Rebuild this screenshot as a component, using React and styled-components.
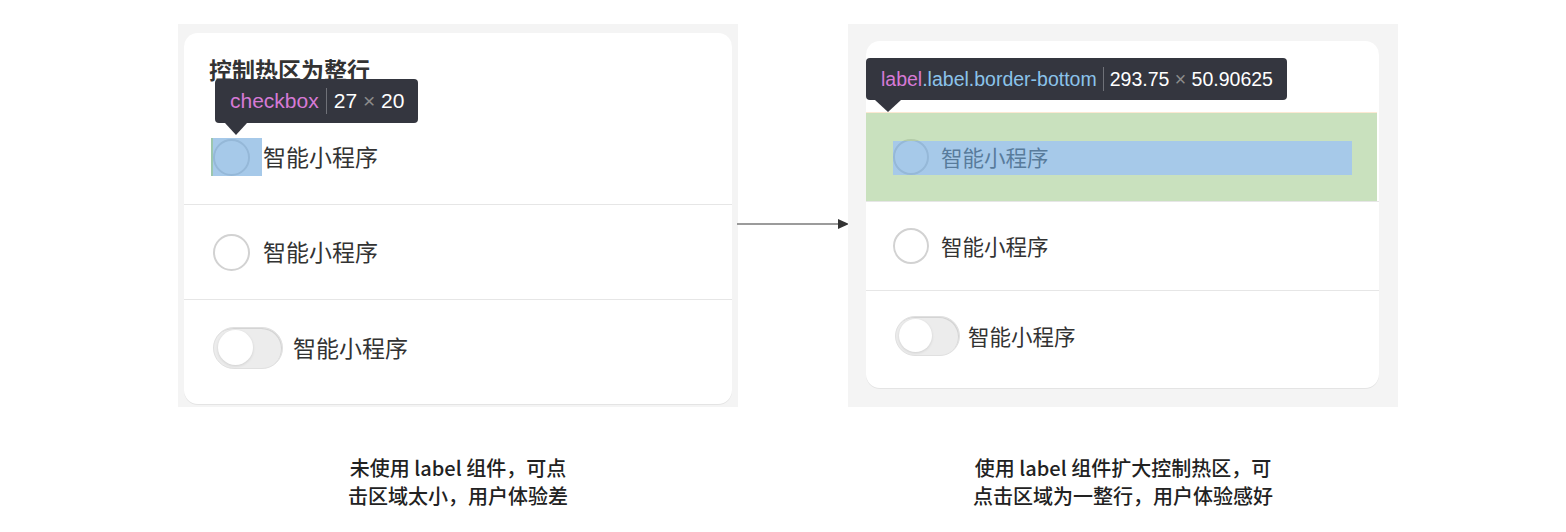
import React from "react";
import styled, { createGlobalStyle } from "styled-components";

const SIZES = {
  lg: {
    font: 23, circle: 37, check: 51, circleOffset: 2,
    swW: 70, swH: 42, thumb: 35, swPad: 4, swGap: 10,
    rowH: 95, rowPad: 27, head: 77, titlePadTop: 23, titlePadLeft: 25, bottomPad: 9,
    panelW: 560, panelPad: "9px 6px 3px 6px",
  },
  sm: {
    font: 21.5, circle: 36, check: 47, circleOffset: 0,
    swW: 65, swH: 40, thumb: 33, swPad: 3, swGap: 8,
    rowH: 89, rowPad: 27, head: 72, titlePadTop: 22, titlePadLeft: 23, bottomPad: 8,
    panelW: 550, panelPad: "17px 19px 19px 18px",
  },
};
const sz = (key) => (p) => SIZES[p.$size][key];

const GlobalStyle = createGlobalStyle`
  html, body { margin: 0; padding: 0; background: #ffffff; }
  body { font-family: "Noto Sans CJK SC", "Noto Sans", sans-serif; }
  * { box-sizing: border-box; }
`;

const Stage = styled.div`
  display: flex;
  align-items: flex-start;
  padding: 24px 0 0 178px;
  width: 1566px;
  height: 532px;
`;

const Column = styled.div`
  display: flex;
  flex-direction: column;
  width: ${sz("panelW")}px;
  flex: none;
`;

const Panel = styled.div`
  width: 100%;
  height: 383px;
  background: #f4f4f4;
  padding: ${sz("panelPad")};
`;

const Card = styled.div`
  position: relative;
  height: 100%;
  background: #ffffff;
  border-radius: 14px;
  box-shadow: 0 1px 0 #e4e4e4;
  padding-bottom: ${sz("bottomPad")}px;
  display: flex;
  flex-direction: column;
`;

const Head = styled.div`
  height: ${sz("head")}px;
  padding: ${sz("titlePadTop")}px 0 0 ${sz("titlePadLeft")}px;
  flex: none;
`;

const Title = styled.div`
  font-size: ${sz("font")}px;
  line-height: 1.2;
  font-weight: 700;
  color: #333333;
`;

const Row = styled.label`
  position: relative;
  display: flex;
  align-items: center;
  height: ${sz("rowH")}px;
  padding-left: ${sz("rowPad")}px;
  border-bottom: ${(p) => (p.$last ? "none" : "1px solid #e6e6e6")};
  flex: none;
`;

const RowText = styled.span`
  font-size: ${sz("font")}px;
  line-height: 1.2;
  color: #333333;
  margin-left: 1px;
`;

const CheckHit = styled.span`
  position: relative;
  display: flex;
  align-items: center;
  width: ${sz("check")}px;
  height: 38px;
  flex: none;
`;

const Circle = styled.span`
  display: block;
  width: ${sz("circle")}px;
  height: ${sz("circle")}px;
  margin-left: ${sz("circleOffset")}px;
  border-radius: 50%;
  border: 2px solid #d2d2d2;
  background: #ffffff;
`;

const ElementHighlight = styled.span`
  position: absolute;
  inset: 0;
  background: rgba(111, 168, 220, 0.62);
  border-left: 2px solid rgba(147, 196, 125, 0.55);
`;

const BoxHighlight = styled.span`
  position: absolute;
  top: 0;
  left: 0;
  right: 2px;
  bottom: 0;
  border-style: solid;
  border-color: rgba(147, 196, 125, 0.5);
  border-width: 28px 25px 26px 27px;
  background: rgba(111, 168, 220, 0.62);
  background-clip: padding-box;
  box-shadow: 0 -1px 0 rgba(246, 178, 107, 0.3);
`;

const Switch = styled.span`
  display: flex;
  align-items: center;
  width: ${sz("swW")}px;
  height: ${sz("swH")}px;
  margin-left: 2px;
  margin-right: ${(p) => SIZES[p.$size].swGap - 1}px;
  padding-left: ${sz("swPad")}px;
  border-radius: ${(p) => SIZES[p.$size].swH / 2}px;
  background: #ececec;
  border: 1px solid #e0e0e0;
  box-shadow: inset -1px 1px 0 #d4d4d4;
  flex: none;
`;

const Thumb = styled.span`
  display: block;
  width: ${sz("thumb")}px;
  height: ${sz("thumb")}px;
  border-radius: 50%;
  background: #ffffff;
  box-shadow: 0 1px 3px rgba(0, 0, 0, 0.12);
`;

const Tooltip = styled.div`
  position: absolute;
  left: ${(p) => p.$left}px;
  top: ${(p) => p.$top}px;
  height: ${(p) => p.$height}px;
  display: flex;
  align-items: center;
  padding: 0 14px 0 15px;
  background: #34363f;
  border-radius: 4px;
  font-family: "Liberation Sans", Arial, sans-serif;
  font-size: ${(p) => p.$font}px;
  color: #ffffff;
  white-space: nowrap;
  z-index: 2;

  &::after {
    content: "";
    position: absolute;
    top: 100%;
    left: ${(p) => p.$arrowX - p.$arrowW / 2}px;
    border-style: solid;
    border-width: 12px ${(p) => p.$arrowW / 2}px 0 ${(p) => p.$arrowW / 2}px;
    border-color: #34363f transparent transparent transparent;
  }
`;

const Tag = styled.span`
  color: #d67ad6;
`;

const ClassName = styled.span`
  color: #8bc3ea;
`;

const Sep = styled.span`
  display: inline-block;
  width: 0;
  height: 1.2em;
  border-left: 1px solid #6f7178;
  margin: 0 ${(p) => p.$gap}px;
`;

const Times = styled.span`
  color: #8c8c8c;
  white-space: pre;
`;

const ArrowBox = styled.div`
  width: 110px;
  flex: none;
  margin-top: 187px;
  margin-left: -1px;
  margin-right: 1px;
  height: 12px;
`;

const Caption = styled.p`
  margin: 47px 0 0 0;
  text-align: center;
  font-size: 20px;
  line-height: 28px;
  font-weight: 500;
  color: #222222;
`;

function Checkbox({ size, highlight }) {
  return (
    <CheckHit $size={size}>
      <Circle $size={size} />
      {highlight && <ElementHighlight />}
    </CheckHit>
  );
}

function Toggle({ size }) {
  return (
    <Switch $size={size}>
      <Thumb $size={size} />
    </Switch>
  );
}

export default function App() {
  return (
    <>
      <GlobalStyle />
      <Stage>
        <Column $size="lg">
          <Panel $size="lg">
            <Card $size="lg">
              <Head $size="lg">
                <Title $size="lg">控制热区为整行</Title>
              </Head>
              <Row $size="lg">
                <Checkbox size="lg" highlight />
                <RowText $size="lg">智能小程序</RowText>
              </Row>
              <Row $size="lg">
                <Checkbox size="lg" />
                <RowText $size="lg">智能小程序</RowText>
              </Row>
              <Row $size="lg" $last>
                <Toggle size="lg" />
                <RowText $size="lg">智能小程序</RowText>
              </Row>
              <Tooltip $left={31} $top={46} $height={44} $font={21} $arrowX={21} $arrowW={22}>
                <Tag>checkbox</Tag>
                <Sep $gap={7} />
                27<Times> × </Times>20
              </Tooltip>
            </Card>
          </Panel>
          <Caption>
            未使用 label 组件，可点
            <br />
            击区域太小，用户体验差
          </Caption>
        </Column>

        <ArrowBox>
          <svg width="112" height="12" viewBox="0 0 112 12">
            <line x1="0" y1="6" x2="103" y2="6" stroke="#7a7a7a" strokeWidth="1.6" />
            <path d="M101 1 L112 6 L101 11 Z" fill="#333333" />
          </svg>
        </ArrowBox>

        <Column $size="sm">
          <Panel $size="sm">
            <Card $size="sm">
              <Head $size="sm" />
              <Row $size="sm">
                <Checkbox size="sm" />
                <RowText $size="sm">智能小程序</RowText>
                <BoxHighlight />
              </Row>
              <Row $size="sm">
                <Checkbox size="sm" />
                <RowText $size="sm">智能小程序</RowText>
              </Row>
              <Row $size="sm" $last>
                <Toggle size="sm" />
                <RowText $size="sm">智能小程序</RowText>
              </Row>
              <Tooltip $left={0} $top={17} $height={42} $font={19.5} $arrowX={22} $arrowW={26}>
                <Tag>label</Tag>
                <ClassName>.label.border-bottom</ClassName>
                <Sep $gap={6} />
                293.75<Times> × </Times>50.90625
              </Tooltip>
            </Card>
          </Panel>
          <Caption>
            使用 label 组件扩大控制热区，可
            <br />
            点击区域为一整行，用户体验感好
          </Caption>
        </Column>
      </Stage>
    </>
  );
}
